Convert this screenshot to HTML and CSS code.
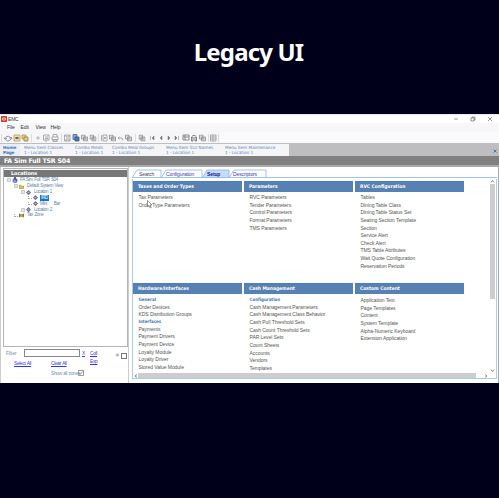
FILE: index.html
```html
<!DOCTYPE html>
<html lang="en">
<head>
<meta charset="utf-8">
<title>Legacy UI</title>
<link rel="stylesheet" href="styles.css">
</head>
<body>
<svg class="defs" aria-hidden="true">
  <symbol id="expand" viewBox="0 0 4 4"><path d="M.5.5h3v3h-3zM1 2h2" fill="#fff" stroke="#a5a5a5" stroke-width=".6"/></symbol>
  <symbol id="node" viewBox="0 0 6 6"><path d="M3 0 4.200 1.300 6 3 4.600 4.700 3 6 1.400 4.700 0 3 1.800 1.300z" fill="#77719b"/><path d="M2 3h2" stroke="#d9d6f0" stroke-width=".8"/></symbol>
  <symbol id="pages" viewBox="0 0 7 7"><path d="M.5.5h3.5v4H.5zM2.5 2.5h4v4h-4z" fill="#ddd" stroke="#8d8d8d" stroke-width=".8"/><path d="M3.5 4h2M3.5 5.3h2" stroke="#999" stroke-width=".5"/></symbol>
</svg>
<h1 class="title">Legacy UI</h1>
<main class="window">
  <header class="titlebar">
    <svg class="app-icon" viewBox="0 0 6 6"><rect width="6" height="6" rx=".7" fill="#d8382c"/><rect x="1.4" y="2" width="3.2" height="2" rx="1" fill="none" stroke="#fff" stroke-width=".8"/></svg>
    <span>EMC</span>
    <svg class="controls" viewBox="0 0 40 6" fill="none" stroke="#555" stroke-width=".6"><path d="M1 3h4M18 2h3v3h-3zM19 2V1h3v3h-1M35 1l4 4m0-4-4 4"/></svg>
  </header>
  <nav class="menu"><span>File</span><span>Edit</span><span>View</span><span>Help</span></nav>
  <div class="toolbar">
  <svg viewBox="0 0 220 11" fill="none" stroke="#999" stroke-width=".8">
    <path d="M1.5 2v8M31.500 2v8M61.500 2v8M98.500 2v8M135.500 2v8M208.500 2v8M218.500 2v8" stroke="#d5d5d5"/>
    <path d="M5 7a3 3 0 0 1 5-2M11 5a3 3 0 0 1-5 3M4 5.500l1.300 2 1.500-1.500M12 7l-1.200-2-1.500 1.500" stroke="#777"/>
    <path d="M14 3h6v6h-6z" fill="#f5dd8b" stroke="#aaa078"/><path d="M15.500 5h3v2h-3z" fill="#5b5f91" stroke="none"/>
    <path d="M22 3h4v4h-4z" fill="#edcf59" stroke="#a6995e"/><path d="M24 5h4v4h-4z" fill="#e4cd80" stroke="#8d8250"/>
    <path d="M36 6h4M38 4v4" stroke="#aaa"/><path d="M43.500 3h5.500v5h-5.500zM45 5h3M45 6.500h3M46 8v2"/>
    <path d="M53 5V2.500h4V5M52 5h6v3h-6zM53 7.500h4v2h-4z"/>
    <path d="M64.500 3h5.500v6h-5.500zM66 3v2h3V3M66 9V7h3v2"/>
    <path d="M73 2.500h4v5h-4z" fill="#83a9db" stroke="#426b9f"/><path d="M75 5h4v4h-4z" fill="#56779e" stroke="#365776"/>
    <use href="#pages" x="81" y="2.500" width="7" height="7"/><use href="#pages" x="89.500" y="2.500" width="7" height="7"/>
    <path d="M101.500 3v6M103 3h4v6h-4zM104 5l2 2m0-2-2 2"/>
    <use href="#pages" x="109" y="2.500" width="7" height="7"/><path d="M118 6h4q1.500 1 0 2.500M119.500 4.500 118 6l1.500 1.500"/>
    <use href="#pages" x="125" y="2.500" width="7" height="7"/><use href="#pages" x="138.500" y="2.500" width="7" height="7"/>
    <path d="M150.500 4v4M154 4l-2 2 2 2zM162 4l-2 2 2 2zM168 4l2 2-2 2zM175 4l2 2-2 2zM178.500 4v4" fill="#777" stroke="#777" stroke-width=".5"/>
    <path d="M183 3h6v5h-6zM183 5h6M185 3v5" stroke="#777"/><path d="M191.500 5h1.500v4h-1.500zM195 5h1.500v4h-1.500zM192.500 3.500h3" stroke="#666"/>
    <use href="#pages" x="199" y="2.500" width="7" height="7"/><path d="M210.500 3h5.500v6h-5.500zM210.500 5h5.500M210.500 7h5.500M213 3v6"/>
  </svg>
  </div>
  <nav class="doc-tabs">
    <div class="doc-tab home">Home<br>Page</div><div class="doc-tab classes">Menu Item Classes<br>1 - Location 1</div><div class="doc-tab meals">Combo Meals<br>1 - Location 1</div><div class="doc-tab groups">Combo Meal Groups<br>1 - Location 1</div><div class="doc-tab slu">Menu Item SLU Names<br>1 - Location 1</div><div class="doc-tab maintenance">Menu Item Maintenance<br>1 - Location 1</div>
    <svg class="close" viewBox="0 0 4 4"><path d="m.5.5 3 3m0-3-3 3" stroke="#3774b4" stroke-width=".9"/></svg>
  </nav>
  <div class="site-name">FA Sim Full TSR S04</div>
  <div class="workspace">
    <aside class="sidebar">
      <section class="locations">
        <h2>Locations</h2>
        <ul class="tree">
          <li><svg class="expander"><use href="#expand"/></svg><svg class="root" viewBox="0 0 6 6"><circle cx="3" cy="3.500" r="2.500" fill="#7479c8"/><path d="M2 0h2v2h1v2H2z" fill="#5c56a7"/><path d="M2 4h2" stroke="#fff" stroke-width=".6"/></svg><span>FA Sim Full TSR S04</span></li>
          <li class="level1"><svg class="expander"><use href="#expand"/></svg><svg class="folder" viewBox="0 0 6 5"><path d="M0 1h2l1 1h3v3H0z" fill="#d4ca44" stroke="#77702b" stroke-width=".5"/></svg><span>Default System View</span></li>
          <li class="level2"><svg class="expander"><use href="#expand"/></svg><svg viewBox="0 0 6 6"><use href="#node" width="6" height="6"/></svg><span>Location 1</span></li>
          <li class="level3"><i></i><svg viewBox="0 0 6 6"><use href="#node" width="6" height="6"/></svg><span class="selected">IRD</span></li>
          <li class="level3"><i></i><svg viewBox="0 0 6 6"><use href="#node" width="6" height="6"/></svg><span>Mini</span><span class="bar">Bar</span></li>
          <li class="level2"><svg class="expander"><use href="#expand"/></svg><svg viewBox="0 0 6 6"><use href="#node" width="6" height="6"/></svg><span>Location 2</span></li>
          <li class="level1"><i></i><svg class="zone" viewBox="0 0 6 5"><path d="m0 0 2 1h2l2-1v5L4 4H2L0 5z" fill="#817535"/><path d="m1 1 4 3m0-3L1 4" stroke="#ddd05a" stroke-width=".7"/></svg><span>Tax Zone</span></li>
        </ul>
      </section>
      <form class="filter">
        <label class="filter-label" for="filter">Filter</label><input id="filter" type="text" aria-label="Filter">
        <a class="clear" href="#">X</a><a class="coll" href="#">Coll</a><span class="hash">#</span><i class="box"></i>
        <a class="select-all" href="#">Select All</a><a class="clear-all" href="#">Clear All</a><a class="exp" href="#">Exp</a>
        <span class="show-zones">Show all zones</span><svg class="checked" viewBox="0 0 6 6"><path d="M.4.4h5.200v5.200H.4zM1.400 3l1 1.300L4.700 1.500" fill="none" stroke="#777" stroke-width=".8"/></svg>
      </form>
    </aside>
    <section class="content">
      <nav class="page-tabs"><span class="search">Search</span><span class="config">Configuration</span><span class="setup">Setup</span><span class="desc">Descriptors</span>
        <svg class="tab-shapes" viewBox="0 0 365 10" fill="#fff" stroke="#8bb3eb" stroke-width=".8"><path d="M0 9 5 1h24v8M29 9l5-8h36v8M97 9l5-8h32v8"/><path d="m70 9 5-8h22v8" fill="#c9dcfa"/><path d="M0 8.500h365"/></svg>
      </nav>
      <div class="scroll-panel">
        <div class="directory">
          <section><h3>Taxes and Order Types</h3><ul><li>Tax Parameters</li><li>Order Type Parameters</li></ul></section>
          <section><h3>Parameters</h3><ul><li>RVC Parameters</li><li>Tender Parameters</li><li>Control Parameters</li><li>Format Parameters</li><li>TMS Parameters</li></ul></section>
          <section><h3>RVC Configuration</h3><ul><li>Tables</li><li>Dining Table Class</li><li>Dining Table Status Set</li><li>Seating Section Template</li><li>Section</li><li>Service Alert</li><li>Check Alert</li><li>TMS Table Attributes</li><li>Wait Quote Configuration</li><li>Reservation Periods</li></ul></section>
          <section class="lower"><h3>Hardware/Interfaces</h3><ul><li class="group">General</li><li>Order Devices</li><li>KDS Distribution Groups</li><li class="group">Interfaces</li><li>Payments</li><li>Payment Drivers</li><li>Payment Device</li><li>Loyalty Module</li><li>Loyalty Driver</li><li>Stored Value Module</li></ul></section>
          <section class="lower"><h3>Cash Management</h3><ul><li class="group">Configuration</li><li>Cash Management Parameters</li><li>Cash Management Class Behavior</li><li>Cash Pull Threshold Sets</li><li>Cash Count Threshold Sets</li><li>PAR Level Sets</li><li>Count Sheets</li><li>Accounts</li><li>Vendors</li><li>Templates</li></ul></section>
          <section class="lower"><h3>Custom Content</h3><ul><li>Application Text</li><li>Page Templates</li><li>Content</li><li>System Template</li><li>Alpha-Numeric Keyboard</li><li>Extension Application</li></ul></section>
        </div>
        <div class="vscroll"><svg viewBox="0 0 5 4"><path d="m1 3 1.500-2L4 3" fill="none" stroke="#555" stroke-width=".7"/></svg><div class="vthumb"></div><svg viewBox="0 0 5 4"><path d="m1 1 1.500 2L4 1" fill="none" stroke="#555" stroke-width=".7"/></svg></div>
        <div class="hscroll"><svg viewBox="0 0 4 4"><path d="M3 .5 1 2l2 1.500" fill="none" stroke="#555" stroke-width=".7"/></svg><div class="hthumb"></div><svg viewBox="0 0 4 4"><path d="m1 .5 2 1.500-2 1.500" fill="none" stroke="#555" stroke-width=".7"/></svg></div>
      </div>
    </section>
  </div>
  <svg class="cursor" viewBox="0 0 6 9"><path d="M.5.5v6.200L2 5.500l1.200 2.500 1-.5L3 5h2z" fill="#fff" stroke="#555" stroke-width=".6"/></svg>
</main>
</body>
</html>
```
FILE: styles.css
```css
* { box-sizing: border-box; }
body { margin: 0; width: 499px; height: 498px; overflow: hidden; background: #00001b; font: 5px "Liberation Sans", sans-serif; color: #555; }
.defs { position: absolute; width: 0; height: 0; }
svg { display: block; flex: none; }
h1, h2, h3, ul { margin: 0; padding: 0; }
ul { list-style: none; }
.title { height: 114px; padding: 35px 2px 0 0; font: 700 24px/34px "Noto Sans", sans-serif; letter-spacing: -.850px; text-align: center; color: #fff; }
.window { position: relative; height: 269px; background: #fff; white-space: nowrap; overflow: hidden; }
.titlebar { display: flex; align-items: center; height: 9px; padding: 0 6px 0 1px; color: #333; border-top: 1px solid #e8e8ee; letter-spacing: -.200px; }
.app-icon { width: 6px; height: 6px; margin-right: 1px; }
.controls { width: 40px; height: 6px; margin-left: auto; }
.menu { display: flex; height: 9px; padding-left: 7px; line-height: 9px; font-size: 5px; letter-spacing: -.100px; background: #f7f7f9; color: #333; }
.menu span { width: 13.500px; }
.menu span:nth-child(n + 2) { width: 15px; }
.toolbar { height: 11px; background: #fafafc; }
.toolbar svg { width: 220px; height: 11px; background: #f6f6f8; }
.doc-tabs { display: flex; height: 13px; padding-top: 1px; background: #bebdc0; font: 4.300px/5px "DejaVu Sans", sans-serif; letter-spacing: -.080px; color: #6287b7; }
.doc-tab { height: 12px; padding-top: 1px; background: #f5f5f7; }
.home { width: 20px; padding-left: 3px; font-weight: bold; color: #4c75b3; background: #e9eff8; letter-spacing: -.150px; }
.classes { width: 54px; padding-left: 4px; }
.meals { width: 38px; padding-left: 1px; }
.groups { width: 53px; }
.slu { width: 60px; padding-left: 1px; }
.maintenance { width: 64px; }
.close { width: 4px; height: 4px; margin: 5px 2px 0 auto; }
.site-name { height: 9px; padding-left: 4px; background: #808080; color: #fff; font: bold 6.300px/9px "DejaVu Sans", sans-serif; letter-spacing: -.220px; }
.workspace { display: flex; height: 218px; border-top: 2px solid #aaa; border-right: 1px solid #aaa; }
.sidebar { width: 128px; padding: 1px 0 0 2px; border-left: 1px solid #ccc; }
.locations { width: 125px; height: 179px; border: 1px solid #b4b4b4; }
.locations h2 { height: 7px; margin-top: 1px; padding-left: 7px; background: #777; color: #fff; font: bold 5px/7px "DejaVu Sans", sans-serif; letter-spacing: -.100px; }
.tree { padding: .500px 0 0 3px; color: #6786a5; }
.tree li { display: flex; align-items: center; height: 5.850px; font-size: 4.600px; line-height: 6px; letter-spacing: -.400px; word-spacing: .600px; }
.tree svg { width: 5px; height: 5px; margin-right: 3px; }
.tree .expander { width: 4px; height: 4px; margin-right: 1px; }
.tree i { width: 4px; height: 3px; margin-right: 1px; border-left: .500px dotted #aaa; border-bottom: 1px dotted #aaa; }
.tree .root { width: 6px; height: 6px; margin-right: 2px; }
.tree .level1 { padding-left: 7px; }
.tree .level2 { padding-left: 14px; }
.tree .level3 { padding-left: 21px; }
.tree .level3 svg { margin-right: 2px; }
.tree .selected { min-width: 8px; padding: 0 1px; background: #1673d1; color: #fff; }
.tree .bar { margin-left: 7px; }
.filter { display: grid; grid-template: 10px 10px 10px / 10px 9px 28px 28px 6px 14px 17px 9px; padding: 1px 0 0 2px; align-items: center; color: #708fac; font-size: 4.800px; letter-spacing: -.300px; word-spacing: .400px; }
.filter a { color: #3535ed; }
.filter input { grid-area: 1 / 3 / 2 / 5; width: 56px; height: 8px; padding: 0; border: 1px solid #888; background: #fff; }
.filter-label { grid-area: 1 / 1; padding-left: 1px; letter-spacing: 0; }
.clear { grid-area: 1 / 5; padding-left: 2px; }
.coll { grid-area: 1 / 6; padding-left: 4px; }
.hash { grid-area: 1 / 7; padding: 4px 0 0 16px; }
.box { grid-area: 1 / 8; align-self: end; width: 6px; height: 6px; margin: 0 0 -1px 4px; border: 1px solid #777; }
.select-all { grid-area: 2 / 2; margin-left: -1px; }
.clear-all { grid-area: 2 / 3; margin-left: 27px; }
.exp { grid-area: 2 / 6; padding: 0 0 3px 4px; }
.show-zones { grid-area: 3 / 3; margin-left: 27px; }
.checked { grid-area: 3 / 4; width: 6px; height: 6px; margin-left: 26px; }
.content { width: 370px; padding: 2px 0 0 3px; border-left: 1px solid #ccc; }
.page-tabs { position: relative; display: flex; align-items: center; width: 365px; height: 10px; font-size: 5px; letter-spacing: -.120px; color: #4040a5; }
.page-tabs span { position: relative; z-index: 1; }
.tab-shapes { position: absolute; left: 0; top: 0; width: 365px; height: 10px; }
.search { width: 34px; padding-left: 7px; color: #444; }
.config { width: 41px; }
.setup { width: 26px; font-weight: bold; color: #181894; }
.scroll-panel { display: grid; grid-template: 194px 5px / 1fr 6px; width: 365px; height: 200px; border: 1px solid #a8cdec; border-top: 0; }
.directory { display: grid; grid-template-columns: 109px 109px 109px; grid-template-rows: 102px 92px; column-gap: 2px; padding-top: 2px; overflow: hidden; height: 194px; }
.directory section { padding-bottom: 1px; }
.directory h3 { height: 11px; padding-left: 5px; background: linear-gradient(#4b7eb5 1px, #5781b2 1px); color: #fff; font: bold 4.900px/11px "DejaVu Sans Condensed", "DejaVu Sans", sans-serif; }
.directory ul { padding: 1px 0 0 5.500px; color: #555; letter-spacing: -.050px; }
.directory .lower ul { padding-top: 2px; }
.directory li { height: 7.650px; line-height: 8px; font-size: 5px; }
.directory .group { height: 6.700px; color: #4877af; font: bold 4.500px/8px "DejaVu Sans Condensed", "DejaVu Sans", sans-serif; }
.vscroll { display: flex; flex-direction: column; }
.vscroll svg { width: 5px; height: 5px; }
.vthumb { width: 5px; height: 115px; margin-bottom: auto; background: #cdcccf; }
.hscroll { grid-column: 1 / 3; display: flex; align-items: center; justify-content: space-between; padding: 0 8px 0 1px; }
.hscroll svg { width: 4px; height: 4px; }
.hthumb { width: 338px; height: 5px; margin-right: auto; background: #cdcccf; }
.cursor { position: absolute; left: 147px; top: 86px; width: 6px; height: 9px; }
```
